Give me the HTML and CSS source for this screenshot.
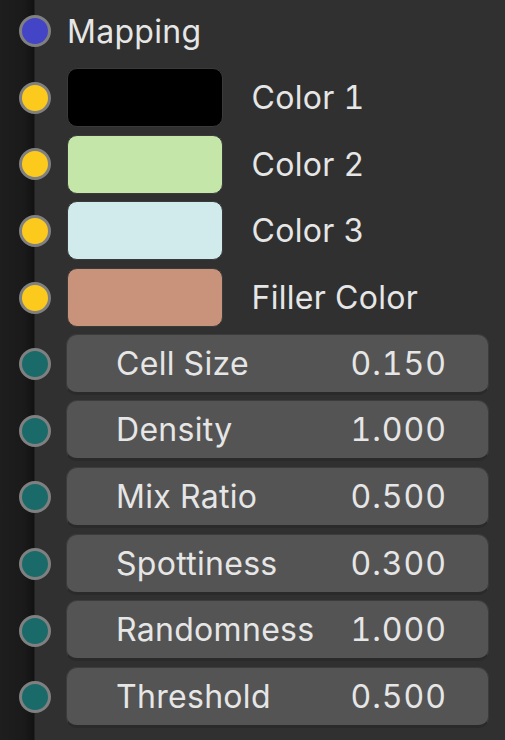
FILE: index.html
```html
<!DOCTYPE html>
<html>
<head>
<meta charset="utf-8">
<link rel="stylesheet" href="styles.css">
</head>
<body>
<div class="node">
  <div class="row">
    <span class="socket vec"></span>
    <span class="title">Mapping</span>
  </div>
  <div class="row">
    <span class="socket col"></span>
    <span class="swatch black"></span>
    <span class="clabel">Color 1</span>
  </div>
  <div class="row">
    <span class="socket col"></span>
    <span class="swatch green"></span>
    <span class="clabel">Color 2</span>
  </div>
  <div class="row">
    <span class="socket col"></span>
    <span class="swatch cyan"></span>
    <span class="clabel">Color 3</span>
  </div>
  <div class="row">
    <span class="socket col"></span>
    <span class="swatch tan"></span>
    <span class="clabel">Filler Color</span>
  </div>
  <div class="row">
    <span class="socket num"></span>
    <div class="field"><span class="flabel">Cell Size</span><span class="fval">0.150</span></div>
  </div>
  <div class="row">
    <span class="socket num"></span>
    <div class="field"><span class="flabel">Density</span><span class="fval">1.000</span></div>
  </div>
  <div class="row">
    <span class="socket num"></span>
    <div class="field"><span class="flabel">Mix Ratio</span><span class="fval">0.500</span></div>
  </div>
  <div class="row">
    <span class="socket num"></span>
    <div class="field"><span class="flabel">Spottiness</span><span class="fval">0.300</span></div>
  </div>
  <div class="row">
    <span class="socket num"></span>
    <div class="field"><span class="flabel">Randomness</span><span class="fval">1.000</span></div>
  </div>
  <div class="row">
    <span class="socket num"></span>
    <div class="field"><span class="flabel">Threshold</span><span class="fval">0.500</span></div>
  </div>
</div>
</body>
</html>
```
FILE: styles.css
```css
html, body {
  margin: 0;
  padding: 0;
}
body {
  width: 505px;
  height: 740px;
  overflow: hidden;
  background: linear-gradient(to right, #1e1e1e 0px, #1a1a1a 24px, #121212 34px, #303030 35px, #303030 100%);
  font-family: Inter, "Noto Sans", sans-serif;
  color: #e6e6e6;
  letter-spacing: 0.3px;
  font-variant-numeric: tabular-nums;
}
.node {
  display: flex;
  flex-direction: column;
  gap: 6.65px;
  padding: 1px 16px 0 19px;
}
.row {
  display: flex;
  align-items: center;
  height: 60px;
}
.socket {
  flex: none;
  width: 26px;
  height: 26px;
  border: 3px solid #808080;
  border-radius: 50%;
  margin-right: 15px;
}
.vec { background: #4444c6; }
.col { background: #fcca1c; }
.num { background: #1b6a6a; }
.title {
  font-size: 32px;
  margin-left: 1px;
}
.swatch {
  flex: none;
  width: 154px;
  height: 57px;
  border: 1.5px solid #3a3a3a;
  border-radius: 10px;
  margin-left: 0.5px;
}
.black { background: #000000; }
.green { background: #c4e6a8; }
.cyan { background: #d1eaeb; }
.tan { background: #c8937a; }
.clabel {
  font-size: 32px;
  margin-left: 29px;
}
.field {
  flex: 1;
  display: flex;
  align-items: center;
  justify-content: space-between;
  height: 57px;
  background: #545454;
  border: 1.5px solid #3c3c3c;
  border-bottom: 3px solid #2a2a2a;
  border-radius: 11px;
  padding: 0 41px 0 49px;
  font-size: 32px;
}
.fval {
  letter-spacing: 1px;
}
```
